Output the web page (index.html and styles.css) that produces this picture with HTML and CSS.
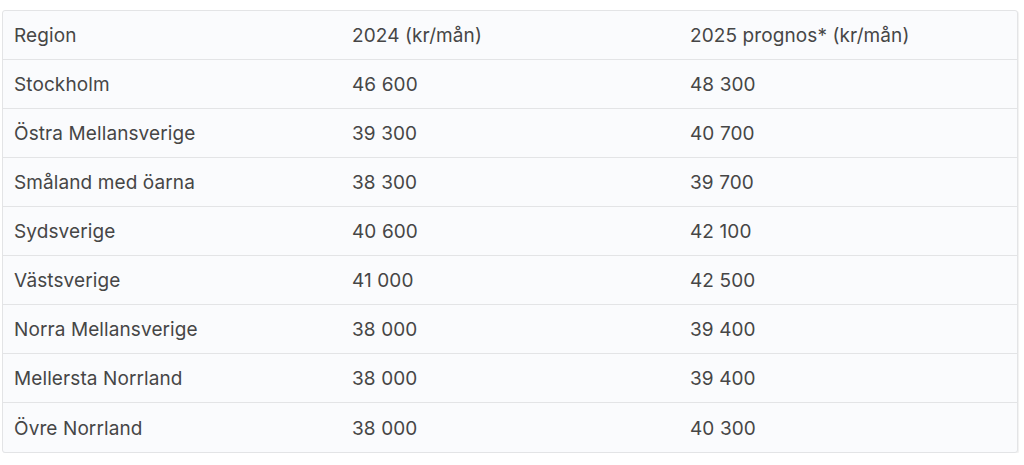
FILE: index.html
```html
<!DOCTYPE html>
<html lang="sv">
<head>
<meta charset="utf-8">
<link rel="stylesheet" href="styles.css">
</head>
<body>
<div class="wrap">
<table class="tbl">
<thead>
<tr><th>Region</th><th>2024 (kr/mån)</th><th>2025 prognos* (kr/mån)</th></tr>
</thead>
<tbody>
<tr><td>Stockholm</td><td>46 600</td><td>48 300</td></tr>
<tr><td>Östra Mellansverige</td><td>39 300</td><td>40 700</td></tr>
<tr><td>Småland med öarna</td><td>38 300</td><td>39 700</td></tr>
<tr><td>Sydsverige</td><td>40 600</td><td>42 100</td></tr>
<tr><td>Västsverige</td><td>41 000</td><td>42 500</td></tr>
<tr><td>Norra Mellansverige</td><td>38 000</td><td>39 400</td></tr>
<tr><td>Mellersta Norrland</td><td>38 000</td><td>39 400</td></tr>
<tr><td>Övre Norrland</td><td>38 000</td><td>40 300</td></tr>
</tbody>
</table>
</div>
</body>
</html>
```
FILE: styles.css
```css
html, body { margin: 0; padding: 0; background: #ffffff; }
.wrap { padding: 10px 6px 0 2px; }
.tbl {
  width: 1016px;
  border-collapse: separate;
  border-spacing: 0;
  background: #fafbfd;
  border: 1px solid #e3e4e6;
  border-radius: 3px;
  box-shadow: 1px 1px 1px rgba(0,0,0,0.06);
  font-family: Inter, "Open Sans", sans-serif;
  font-size: 19px;
  letter-spacing: 0.1px;
  color: #464646;
  table-layout: fixed;
}
.tbl th, .tbl td {
  text-align: left;
  font-weight: 400;
  height: 49px;
  padding: 1px 0 0 11px;
  box-sizing: border-box;
  border-bottom: 1px solid #e3e4e6;
  vertical-align: middle;
}
.tbl tbody tr:last-child td { border-bottom: none; }
```
